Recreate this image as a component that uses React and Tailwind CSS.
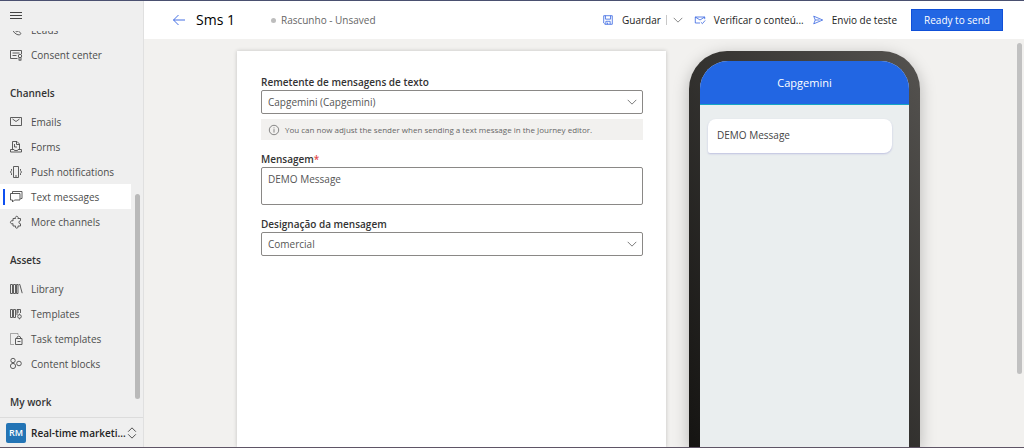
import { useState } from 'react';

const channels = [
  { name: 'Emails', icon: 'mail' },
  { name: 'Forms', icon: 'form' },
  { name: 'Push notifications', icon: 'push' },
  { name: 'Text messages', icon: 'chat' },
  { name: 'More channels', icon: 'puzzle' },
];

const assets = [
  { name: 'Library', icon: 'library' },
  { name: 'Templates', icon: 'templates' },
  { name: 'Task templates', icon: 'task' },
  { name: 'Content blocks', icon: 'blocks' },
];

// Line icons, all drawn on a 14x14 grid
const icons = {
  phone: <path d="M2 3.5 3.5 2l2.3 2.5-1 1.3q1 2 3 3l1.4-1L12 10.5 10.5 12Q5 12 2 3.5Z" />,
  consent: (
    <>
      <path d="M8.5 10.5h-7v-8h11V6M3.5 5h7M3.5 7.5h4" />
      <circle cx="11" cy="8" r="1.7" />
      <path d="M10 9.500v3l1-.8 1 .8v-3" />
    </>
  ),
  mail: <path d="M1.5 2.5h11v8h-11zM3.500 4 7 6.500 10.500 4" />,
  form: (
    <>
      <path d="M3.5 9.5v-8H8L10.500 4v5.500M7.500 1.500v3h3M5.500 4v3H8" />
      <path d="M1.5 9.500H5l.5 1h3l.5-1h3.500V12h-11z" />
    </>
  ),
  push: <path d="M4.500 1.500h5v11h-5zM6 11h2M2.500 4v1.500L1.500 7l1 1.500V10M11.500 4v1.500l1 1.500-1 1.500V10" />,
  chat: (
    <>
      <path d="M3.500 4V1.500H13v7h-1.500" />
      <path d="M1.500 3.500h9.500V10H5.500l-2 2v-2h-2z" />
    </>
  ),
  puzzle: (
    <path d="M4 3.500h2.600a1.400 1.400 0 1 1 2.300 0h2.600v2.200a1.500 1.500 0 1 0 0 3.100V11H8.900a1.400 1.400 0 1 1-2.300 0H4V8.600a1.600 1.600 0 1 1 0-2.600z" />
  ),
  library: <path d="M1.500 2.500h2v9h-2zM4.500 2.500h2v9h-2zM7.500 2.500h1.500v9H7.500zM9.500 2.800l1.300-.4 2.400 8.800" />,
  templates: (
    <>
      <path d="M1.500 2.500h2v8h-2zM4.500 2.500h2v8h-2zM8 8V2.500h3.500V6" />
      <circle cx="10.500" cy="9.500" r="1.800" />
      <path d="M10.500 6.700v1M10.500 11.300v1M9 2.500V6" />
    </>
  ),
  task: (
    <>
      <path d="M5 12.500H1.500v-11h7.500V3" strokeOpacity=".5" />
      <path d="M6.500 6.500h6.500v6H6.500zM8 6.500V5q1.700-1.800 3.500 0v1.500M8.500 9.500h3" />
    </>
  ),
  blocks: (
    <>
      <circle cx="4" cy="3.500" r="2.200" />
      <circle cx="4" cy="9" r="2.600" />
      <circle cx="10" cy="6.500" r="2.300" />
    </>
  ),
  save: <path d="M2 2h10v10H3.500L2 10.500zM4 2v4h6V2M4.500 12V8.500h5V12M6.500 10v2" />,
  check: <path d="M7 10.500H1.500v-7h11V6M1.500 3.500 7 7l5.500-3.500M8 9.500l1.800 1.800L13 7.500" />,
  send: <path d="M2 2.500 12.500 7 2 11.500 3.800 7zM3.800 7h5" />,
  back: <path d="M13 7H1.500M6.500 2l-5 5 5 5" />,
  down: <path d="M2 4.500 7 9.500l5-5" />,
  updown: <path d="M2.500 5.500 7 1l4.500 4.500M2.500 8.500 7 13l4.500-4.500" />,
  info: (
    <>
      <circle cx="7" cy="7" r="5.500" />
      <path d="M7 6v4M7 4v1" />
    </>
  ),
};

function Icon({ name, className = 'size-3.5' }) {
  return (
    <svg
      viewBox="0 0 14 14"
      fill="none"
      stroke="currentColor"
      strokeWidth="0.9"
      aria-hidden="true"
      className={`shrink-0 ${className}`}
    >
      {icons[name]}
    </svg>
  );
}

function NavItem({ name, icon, active, onClick }) {
  return (
    <a
      href="#"
      onClick={onClick}
      className={`relative flex h-[25px] items-center gap-2 pl-[9px] text-[#4d4d4d] ${active ? 'bg-white' : ''}`}
    >
      {active && <span className="absolute left-[3px] h-4 w-0.5 bg-[#0f50f0]" />}
      <Icon name={icon} />
      {name}
    </a>
  );
}

function NavHeading({ children }) {
  return <h2 className="flex h-[42px] items-center pt-[10px] pl-[10px] font-semibold text-[#333]">{children}</h2>;
}

function Sidebar() {
  const [active, setActive] = useState('Text messages');

  const renderItem = (item) => (
    <NavItem
      key={item.name}
      name={item.name}
      icon={item.icon}
      active={active === item.name}
      onClick={() => setActive(item.name)}
    />
  );

  return (
    <aside className="flex w-36 shrink-0 flex-col border-r border-[#e0e0e0] bg-[#efefef]">
      <button aria-label="Menu" className="flex h-[30px] shrink-0 items-center pl-[10px]">
        <svg viewBox="0 0 12 8" className="h-2 w-3" stroke="#444" aria-hidden="true">
          <path d="M0 .5h12M0 3.500h12M0 6.500h12" />
        </svg>
      </button>

      {/* Scrolled navigation */}
      <div className="flex min-h-0 flex-1 overflow-hidden">
        <nav className="-mt-3.5 flex-1 whitespace-nowrap">
          {renderItem({ name: 'Leads', icon: 'phone' })}
          {renderItem({ name: 'Consent center', icon: 'consent' })}
          <NavHeading>Channels</NavHeading>
          {channels.map(renderItem)}
          <NavHeading>Assets</NavHeading>
          {assets.map(renderItem)}
          <NavHeading>My work</NavHeading>
        </nav>
        <div className="flex w-3 flex-col pt-[163px] pb-[18px] pl-1">
          <div className="w-[5px] flex-1 rounded-full bg-[#b9b9b9]" />
        </div>
      </div>

      {/* Area switcher */}
      <button className="flex h-[30px] shrink-0 items-center border-t border-[#dcdcdc] pl-[6px] font-semibold whitespace-nowrap text-[#222]">
        <span className="mr-[5px] flex size-5 items-center justify-center rounded-xs bg-[#2374b5] text-[9px] text-white">RM</span>
        Real-time marketi...
        <Icon name="updown" className="size-3" />
      </button>
    </aside>
  );
}

function Header() {
  return (
    <header className="flex h-[38px] shrink-0 items-center bg-white pr-[21px] pl-7 whitespace-nowrap text-[#222]">
      <button aria-label="Back" className="text-[#2f5fe0]">
        <Icon name="back" />
      </button>
      <h1 className="ml-2.5 text-[14px] font-medium text-black">Sms 1</h1>
      <span className="ml-9 size-[5px] rounded-full bg-[#bdbdbd]" />
      <span className="ml-[5px] text-[#666]">Rascunho - Unsaved</span>

      <div className="ml-auto flex items-center">
        <button className="flex items-center gap-2">
          <Icon name="save" className="size-3 text-[#2f5fe0]" />
          Guardar
        </button>
        <button aria-label="More save options" className="ml-[5px] flex h-[10px] items-center border-l border-[#c8c8c8] pl-[5px] text-[#666]">
          <Icon name="down" className="size-3" />
        </button>
        <button className="ml-2.5 flex items-center gap-2">
          <Icon name="check" className="size-3 text-[#2f5fe0]" />
          Verificar o conteú...
        </button>
        <button className="ml-2 flex items-center gap-2">
          <Icon name="send" className="size-3 text-[#2f5fe0]" />
          Envio de teste
        </button>
        <button className="ml-3.5 h-[22px] w-[92px] border border-[#1050d8] bg-[#2266e3] text-white">Ready to send</button>
      </div>
    </header>
  );
}

function SelectField({ id, label, options }) {
  return (
    <div>
      <label htmlFor={id} className="block font-semibold text-[#333]">{label}</label>
      <div className="relative text-[#555]">
        <select id={id} className="block h-6 w-full appearance-none rounded-xs border border-[#8a8886] bg-white pl-[6px]">
          {options.map((option) => (
            <option key={option}>{option}</option>
          ))}
        </select>
        <Icon name="down" className="pointer-events-none absolute top-[6px] right-[5px] size-3" />
      </div>
    </div>
  );
}

function MessageForm({ message, onChange }) {
  return (
    <form className="min-w-0 flex-1 bg-white pt-[23px] pr-[23px] pl-6 shadow-[0_0_4px_rgba(0,0,0,0.2)]">
      <SelectField id="sender" label="Remetente de mensagens de texto" options={['Capgemini (Capgemini)']} />
      <p className="mt-[5px] flex h-[21px] items-center gap-[5px] bg-[#f2f1ef] pl-[7px] text-[8px] text-[#666]">
        <Icon name="info" className="size-3" />
        You can now adjust the sender when sending a text message in the Journey editor.
      </p>

      <div className="my-[11px]">
        <label htmlFor="message" className="block font-semibold text-[#333]">
          Mensagem<span className="text-[#e34b4b]">*</span>
        </label>
        <textarea
          id="message"
          value={message}
          onChange={(e) => onChange(e.target.value)}
          className="block h-[38px] w-full resize-none rounded-xs border border-[#8a8886] px-[6px] py-[3px] text-[#555]"
        />
      </div>

      <SelectField id="designation" label="Designação da mensagem" options={['Comercial']} />
    </form>
  );
}

function PhonePreview({ message }) {
  return (
    <div className="w-[231px] shrink-0 rounded-t-[38px] bg-linear-to-tr from-[#151412] to-[#555350] px-[11px] pt-[10px] shadow-[0_4px_16px_rgba(0,0,0,0.25)]">
      <div className="flex h-full flex-col overflow-hidden rounded-t-[28px] bg-[#eaeeef]">
        <div className="flex h-11 items-center justify-center border-b border-[#17a5c4] bg-[#2266e3] text-[11px] font-medium text-white">
          Capgemini
        </div>
        <p className="mt-3.5 mr-[17px] ml-2 h-[34px] rounded-lg rounded-bl-xs bg-white px-[9px] py-2 text-[#444] shadow-[0_1px_2px_rgba(90,90,190,0.3)]">
          {message}
        </p>
      </div>
    </div>
  );
}

function App() {
  const [message, setMessage] = useState('DEMO Message');

  return (
    <div className="flex h-screen overflow-hidden border-t border-b border-t-[#4a5070] border-b-[#5f5566] bg-[#f2f1ef] font-['Open_Sans',sans-serif] text-[10px] leading-4">
      <Sidebar />
      <div className="flex min-w-0 flex-1 flex-col">
        <Header />
        <main className="flex min-h-0 flex-1">
          <div className="flex min-w-0 flex-1 gap-[23px] px-[93px] pt-3">
            <MessageForm message={message} onChange={setMessage} />
            <PhonePreview message={message} />
          </div>
          {/* Page scrollbar */}
          <div className="flex w-[11px] flex-col pt-1 pb-[73px] pl-1">
            <div className="w-[5px] flex-1 rounded-full bg-[#c1c1c1]" />
          </div>
        </main>
      </div>
    </div>
  );
}

export default App;
